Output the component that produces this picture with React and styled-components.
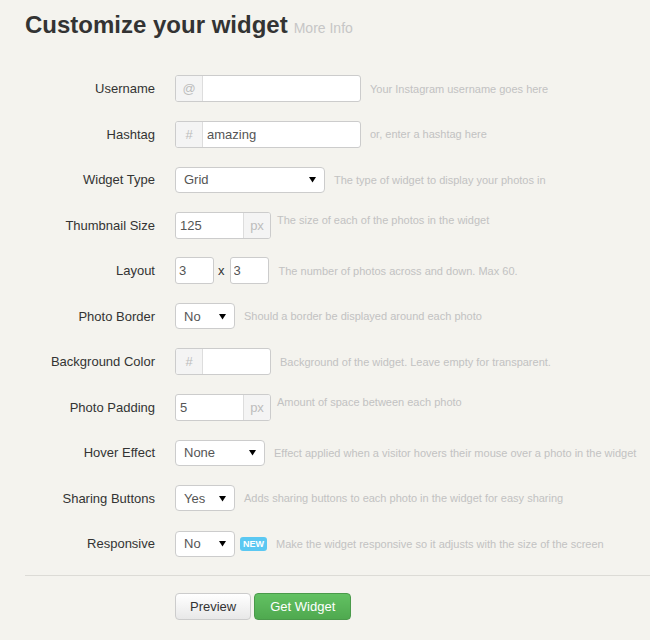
import React from 'react';
import styled, { createGlobalStyle } from 'styled-components';

const GlobalStyle = createGlobalStyle`
  html, body {
    margin: 0;
    padding: 0;
    background: #f4f3ee;
  }
  body {
    font-family: "Liberation Sans", Arial, sans-serif;
    color: #333;
  }
`;

const Page = styled.main`
  padding: 11px 0 20px 25px;
  min-height: 640px;
  box-sizing: border-box;
`;

const Header = styled.h1`
  margin: 0 0 24px;
  font-size: 24px;
  line-height: 28px;
  font-weight: bold;
  color: #333;
`;

const MoreInfo = styled.a`
  margin-left: 6px;
  font-size: 14px;
  font-weight: normal;
  color: #c6c6c6;
  text-decoration: none;
`;

const Form = styled.form`
  display: grid;
  grid-auto-rows: 45.5px;
`;

const Row = styled.div`
  display: grid;
  grid-template-columns: 130px auto;
  column-gap: 20px;
  align-items: center;
`;

const Label = styled.label`
  justify-self: end;
  font-size: 13px;
  color: #333;
`;

const Controls = styled.div`
  display: flex;
  align-items: center;
`;

const Help = styled.span`
  margin-left: ${(props) => (props.tight ? '6px' : '9px')};
  position: relative;
  top: ${(props) => (props.raised ? '-5px' : '0')};
  font-size: 11px;
  color: #c2c2c2;
  white-space: nowrap;
`;

const Group = styled.div`
  display: flex;
  width: ${(props) => props.width}px;
  height: 27px;
  box-sizing: border-box;
  border: 1px solid #ccc;
  border-radius: 3px;
  background: #fff;
  overflow: hidden;
`;

const Addon = styled.span`
  display: flex;
  align-items: center;
  justify-content: center;
  flex: 0 0 26px;
  background: #f4f4f4;
  color: #bdbdbd;
  font-size: 13px;
  border-left: ${(props) => (props.end ? '1px solid #ddd' : 'none')};
  border-right: ${(props) => (props.end ? 'none' : '1px solid #ddd')};
`;

const TextInput = styled.input`
  flex: 1;
  min-width: 0;
  border: 0;
  padding: 0 4px;
  font: 13px "Liberation Sans", Arial, sans-serif;
  color: #555;
  background: transparent;
  outline: none;
`;

const SmallInput = styled.input`
  width: 39px;
  height: 27px;
  box-sizing: border-box;
  border: 1px solid #ccc;
  border-radius: 3px;
  padding: 0 3px;
  font: 13px "Liberation Sans", Arial, sans-serif;
  color: #555;
  background: #fff;
  outline: none;
`;

const Times = styled.span`
  margin: 0 5px 0 4px;
  font-size: 13px;
  color: #333;
`;

const Select = styled.div`
  display: flex;
  align-items: center;
  justify-content: space-between;
  width: ${(props) => props.width}px;
  height: 26px;
  box-sizing: border-box;
  padding: 0 8px;
  border: 1px solid #ccc;
  border-radius: 4px;
  background: #fff;
  font-size: 13px;
  color: #555;
`;

const Badge = styled.span`
  margin-left: 5px;
  padding: 0 3px;
  height: 14px;
  line-height: 14px;
  border-radius: 3px;
  background: #5bc8f2;
  color: #fff;
  font-size: 9px;
  font-weight: bold;
`;

const Divider = styled.hr`
  margin: 8px 0 17px;
  border: 0;
  border-top: 1px solid #dcdbd6;
`;

const Actions = styled.div`
  display: flex;
  gap: 3px;
  padding-left: 150px;
`;

const Button = styled.button`
  height: 27px;
  padding: 0 ${(props) => (props.primary ? 15 : 14)}px;
  border-radius: 4px;
  font: 13px "Liberation Sans", Arial, sans-serif;
  cursor: pointer;
  border: 1px solid ${(props) => (props.primary ? '#4a9a4a' : '#ccc')};
  color: ${(props) => (props.primary ? '#fff' : '#333')};
  background: ${(props) =>
    props.primary
      ? 'linear-gradient(#62c162, #4fa94f)'
      : 'linear-gradient(#ffffff, #e8e8e8)'};
`;

const Arrow = () => (
  <svg width="7" height="7" viewBox="0 0 7 7">
    <path d="M0 1 L7 1 L3.5 6.5 Z" fill="#000" />
  </svg>
);

const Dropdown = ({ width, value }) => (
  <Select width={width}>
    <span>{value}</span>
    <Arrow />
  </Select>
);

const App = () => (
  <Page>
    <GlobalStyle />
    <Header>
      Customize your widget
      <MoreInfo href="#">More Info</MoreInfo>
    </Header>

    <Form onSubmit={(e) => e.preventDefault()}>
      <Row>
        <Label>Username</Label>
        <Controls>
          <Group width={186}>
            <Addon>@</Addon>
            <TextInput defaultValue="" />
          </Group>
          <Help>Your Instagram username goes here</Help>
        </Controls>
      </Row>

      <Row>
        <Label>Hashtag</Label>
        <Controls>
          <Group width={186}>
            <Addon>#</Addon>
            <TextInput defaultValue="amazing" />
          </Group>
          <Help>or, enter a hashtag here</Help>
        </Controls>
      </Row>

      <Row>
        <Label>Widget Type</Label>
        <Controls>
          <Dropdown width={150} value="Grid" />
          <Help>The type of widget to display your photos in</Help>
        </Controls>
      </Row>

      <Row>
        <Label>Thumbnail Size</Label>
        <Controls>
          <Group width={96}>
            <TextInput defaultValue="125" />
            <Addon end>px</Addon>
          </Group>
          <Help tight raised>The size of each of the photos in the widget</Help>
        </Controls>
      </Row>

      <Row>
        <Label>Layout</Label>
        <Controls>
          <SmallInput defaultValue="3" />
          <Times>x</Times>
          <SmallInput defaultValue="3" />
          <Help style={{ marginLeft: 10 }}>The number of photos across and down. Max 60.</Help>
        </Controls>
      </Row>

      <Row>
        <Label>Photo Border</Label>
        <Controls>
          <Dropdown width={60} value="No" />
          <Help>Should a border be displayed around each photo</Help>
        </Controls>
      </Row>

      <Row>
        <Label>Background Color</Label>
        <Controls>
          <Group width={96}>
            <Addon>#</Addon>
            <TextInput defaultValue="" />
          </Group>
          <Help>Background of the widget. Leave empty for transparent.</Help>
        </Controls>
      </Row>

      <Row>
        <Label>Photo Padding</Label>
        <Controls>
          <Group width={96}>
            <TextInput defaultValue="5" />
            <Addon end>px</Addon>
          </Group>
          <Help tight raised>Amount of space between each photo</Help>
        </Controls>
      </Row>

      <Row>
        <Label>Hover Effect</Label>
        <Controls>
          <Dropdown width={90} value="None" />
          <Help>Effect applied when a visitor hovers their mouse over a photo in the widget</Help>
        </Controls>
      </Row>

      <Row>
        <Label>Sharing Buttons</Label>
        <Controls>
          <Dropdown width={60} value="Yes" />
          <Help>Adds sharing buttons to each photo in the widget for easy sharing</Help>
        </Controls>
      </Row>

      <Row>
        <Label>Responsive</Label>
        <Controls>
          <Dropdown width={60} value="No" />
          <Badge>NEW</Badge>
          <Help>Make the widget responsive so it adjusts with the size of the screen</Help>
        </Controls>
      </Row>
    </Form>

    <Divider />

    <Actions>
      <Button type="button">Preview</Button>
      <Button type="button" primary>Get Widget</Button>
    </Actions>
  </Page>
);

export default App;
